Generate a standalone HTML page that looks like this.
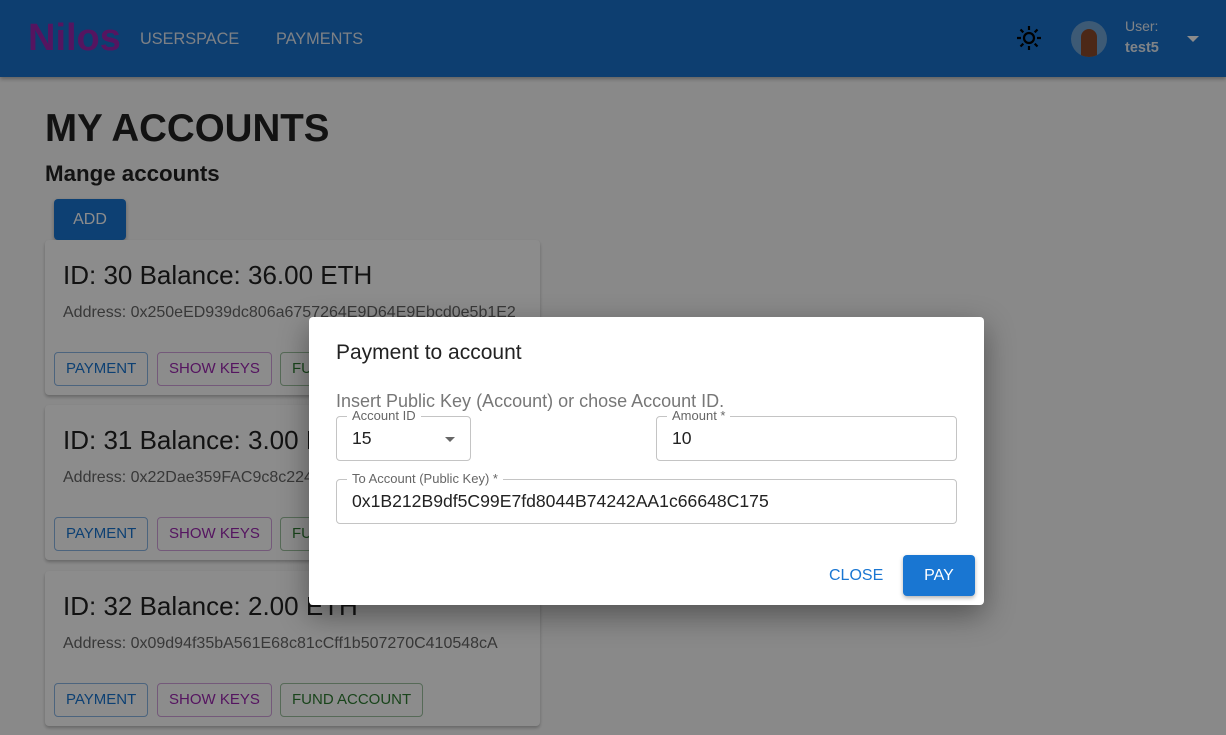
<!DOCTYPE html>
<html><head><meta charset="utf-8"><style>
*{box-sizing:border-box;margin:0;padding:0}
body{width:1226px;height:735px;overflow:hidden;background:#fafafa;font-family:"Liberation Sans",Arial,sans-serif;position:relative}
.hdr{position:absolute;left:0;top:0;width:1226px;height:77px;background:#1872cc;box-shadow:0 2px 4px rgba(0,0,0,.3)}
.logo{position:absolute;left:28px;top:17px;font-size:38px;font-weight:bold;color:#9c27b0}
.nav{position:absolute;top:30px;font-size:16.3px;color:#e3eaf3}
h1{position:absolute;left:45px;top:107px;font-size:38.5px;font-weight:bold;color:#222}
h2{position:absolute;left:45px;top:161px;font-size:22.3px;font-weight:bold;color:#222}
.add{position:absolute;left:54px;top:199px;width:72px;height:41px;background:#1976d2;color:#fff;border-radius:4px;font-size:16px;text-align:center;line-height:41px;box-shadow:0 2px 4px rgba(0,0,0,.3)}
.card{position:absolute;left:45px;width:495px;height:155px;background:#fff;border-radius:4px;box-shadow:0 2px 3px rgba(0,0,0,.25)}
.card .t{position:absolute;left:18px;top:20px;font-size:26px;color:#222}
.card .a{position:absolute;left:18px;top:64px;font-size:16px;color:#666}
.b{position:absolute;top:112px;height:34px;border:1px solid;border-radius:4px;font-size:15px;line-height:32px;padding:0 11px}
.b1{left:9px;color:#1976d2;border-color:#8ab6e6}
.b2{left:112px;color:#9c27b0;border-color:#d4a3de}
.b3{left:235px;color:#2e7d32;border-color:#9dc19f}
.ov{position:absolute;inset:0;background:rgba(0,0,0,.45)}
.dlg{position:absolute;left:309px;top:317px;width:675px;height:288px;background:#fff;border-radius:4px;box-shadow:0 10px 30px rgba(0,0,0,.4)}
.f{position:absolute;border:1px solid #c4c4c4;border-radius:4px;height:45px;font-size:17.6px;color:#222;padding:11px 15px}
.lb{position:absolute;top:-9px;left:10px;background:#fff;padding:0 5px;font-size:13px;color:#666}
</style></head><body>
<div class="hdr">
<div class="logo">Nilos</div>
<div class="nav" style="left:140px">USERSPACE</div>
<div class="nav" style="left:276px">PAYMENTS</div>
<svg style="position:absolute;left:1016px;top:25px" width="26" height="26" viewBox="0 0 26 26" stroke="#000" stroke-width="2.2" fill="none"><circle cx="13" cy="13" r="5"/><path d="M13 1v4M13 21v4M1 13h4M21 13h4M4.5 4.5l2.8 2.8M18.7 18.7l2.8 2.8M4.5 21.5l2.8-2.8M18.7 7.3l2.8-2.8"/></svg>
<div style="position:absolute;left:1071px;top:21px;width:36px;height:36px;border-radius:50%;background:#6fa4d6;overflow:hidden"><div style="position:absolute;left:10px;top:8px;width:16px;height:30px;background:#8a4a2a;border-radius:8px 8px 0 0"></div></div>
<div style="position:absolute;left:1125px;top:18px;font-size:14px;color:#e8eef6">User:</div>
<div style="position:absolute;left:1125px;top:40px;font-size:14.5px;font-weight:bold;color:#e8eef6">test5</div>
<div style="position:absolute;left:1187px;top:36px;border-left:6px solid transparent;border-right:6px solid transparent;border-top:6px solid #fff"></div>
</div>
<h1>MY ACCOUNTS</h1>
<h2>Mange accounts</h2>
<div class="add">ADD</div>
<div class="card" style="top:240px"><div class="t">ID: 30 Balance: 36.00 ETH</div><div class="a">Address: 0x250eED939dc806a6757264E9D64E9Ebcd0e5b1E2</div><div class="b b1">PAYMENT</div><div class="b b2">SHOW KEYS</div><div class="b b3">FUND ACCOUNT</div></div>
<div class="card" style="top:405px"><div class="t">ID: 31 Balance: 3.00 ETH</div><div class="a">Address: 0x22Dae359FAC9c8c2248b0a1b4e8F1c77d3eC8b1a</div><div class="b b1">PAYMENT</div><div class="b b2">SHOW KEYS</div><div class="b b3">FUND ACCOUNT</div></div>
<div class="card" style="top:571px"><div class="t">ID: 32 Balance: 2.00 ETH</div><div class="a">Address: 0x09d94f35bA561E68c81cCff1b507270C410548cA</div><div class="b b1">PAYMENT</div><div class="b b2">SHOW KEYS</div><div class="b b3">FUND ACCOUNT</div></div>
<div class="ov"></div>
<div class="dlg">
<div style="position:absolute;left:27px;top:24px;font-size:21px;color:#222">Payment to account</div>
<div style="position:absolute;left:27px;top:74px;font-size:18px;color:#777">Insert Public Key (Account) or chose Account ID.</div>
<div class="f" style="left:27px;top:99px;width:135px"><span class="lb">Account ID</span>15<div style="position:absolute;right:15px;top:20px;border-left:5px solid transparent;border-right:5px solid transparent;border-top:5px solid #666"></div></div>
<div class="f" style="left:347px;top:99px;width:301px"><span class="lb">Amount *</span>10</div>
<div class="f" style="left:27px;top:162px;width:621px"><span class="lb">To Account (Public Key) *</span>0x1B212B9df5C99E7fd8044B74242AA1c66648C175</div>
<div style="position:absolute;left:520px;top:250px;font-size:16px;color:#1976d2">CLOSE</div>
<div style="position:absolute;left:594px;top:238px;width:72px;height:41px;background:#1976d2;color:#fff;border-radius:4px;font-size:16px;text-align:center;line-height:41px;box-shadow:0 2px 4px rgba(0,0,0,.3)">PAY</div>
</div>
</body></html>
